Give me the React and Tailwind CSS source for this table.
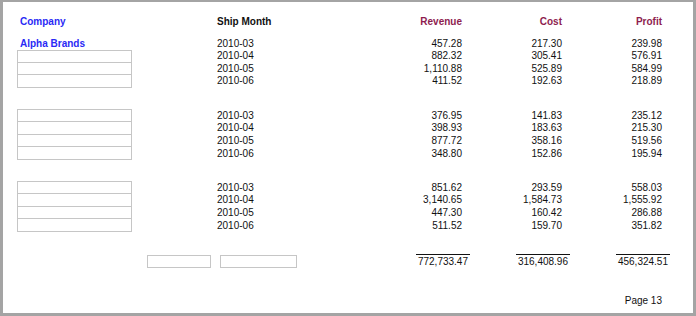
import React from "react";

const groups = [
  {
    name: "Alpha Brands",
    rows: [
      ["2010-03", "457.28", "217.30", "239.98"],
      ["2010-04", "882.32", "305.41", "576.91"],
      ["2010-05", "1,110.88", "525.89", "584.99"],
      ["2010-06", "411.52", "192.63", "218.89"],
    ],
  },
  {
    name: "",
    rows: [
      ["2010-03", "376.95", "141.83", "235.12"],
      ["2010-04", "398.93", "183.63", "215.30"],
      ["2010-05", "877.72", "358.16", "519.56"],
      ["2010-06", "348.80", "152.86", "195.94"],
    ],
  },
  {
    name: "",
    rows: [
      ["2010-03", "851.62", "293.59", "558.03"],
      ["2010-04", "3,140.65", "1,584.73", "1,555.92"],
      ["2010-05", "447.30", "160.42", "286.88"],
      ["2010-06", "511.52", "159.70", "351.82"],
    ],
  },
];

function Row({ company, companyClass, children }) {
  return (
    <div className="flex h-[12.67px] items-center pl-[14px]">
      <div className={"w-[115px] h-full flex items-center " + companyClass}>{company}</div>
      {children}
    </div>
  );
}

export default function App() {
  return (
    <div
      className="w-[696px] h-[316px] bg-white border-l-[3px] border-t-2 border-r-[3px] border-b-[3px] border-[#a4a4a4] text-[10px] leading-none text-[#111]"
      style={{ fontFamily: '"Liberation Sans", Arial, sans-serif' }}
    >
      <div className="flex h-[13px] items-center pl-[14px] mt-[13.5px] font-bold">
        <div className="w-[115px] pl-[3px] text-[#2a2af5]">Company</div>
        <div className="ml-[85px] w-[100px]">Ship Month</div>
        <div className="w-[145px] text-right text-[#8e1d4f]">Revenue</div>
        <div className="w-[100px] text-right text-[#8e1d4f]">Cost</div>
        <div className="w-[100px] text-right text-[#8e1d4f]">Profit</div>
      </div>

      {groups.map((g, gi) => (
        <div key={gi} className={gi === 0 ? "mt-[8.7px]" : "mt-[21.5px]"}>
          {g.rows.map((r, ri) => {
            let company = null;
            let cls = "";
            if (gi === 0 && ri === 0) {
              company = g.name;
              cls = "pl-[3px] font-bold text-[#2a2af5]";
            } else {
              const first = gi === 0 ? ri === 1 : ri === 0;
              cls =
                "border-x border-b border-[#c6c6c6] " +
                (first ? "border-t " : "");
            }
            return (
              <Row key={ri} company={company} companyClass={cls}>
                <div className="ml-[85px] w-[100px]">{r[0]}</div>
                <div className="w-[145px] text-right">{r[1]}</div>
                <div className="w-[100px] text-right">{r[2]}</div>
                <div className="w-[100px] text-right">{r[3]}</div>
              </Row>
            );
          })}
        </div>
      ))}

      <div className="flex h-[14px] pl-[144px] mt-[22px]">
        <div className="mt-px w-[64px] h-[13px] border border-[#c6c6c6]" />
        <div className="mt-px ml-[9px] w-[77px] h-[13px] border border-[#c6c6c6]" />
        <div className="ml-[119px] w-[54px] border-t border-[#111] flex items-center justify-end pr-[2px] pt-px">772,733.47</div>
        <div className="ml-[46px] w-[54px] border-t border-[#111] flex items-center justify-end pr-[2px] pt-px">316,408.96</div>
        <div className="ml-[46px] w-[54px] border-t border-[#111] flex items-center justify-end pr-[2px] pt-px">456,324.51</div>
      </div>

      <div className="flex h-[13px] items-center mt-[26px]">
        <div className="w-[659px] text-right">Page 13</div>
      </div>
    </div>
  );
}
